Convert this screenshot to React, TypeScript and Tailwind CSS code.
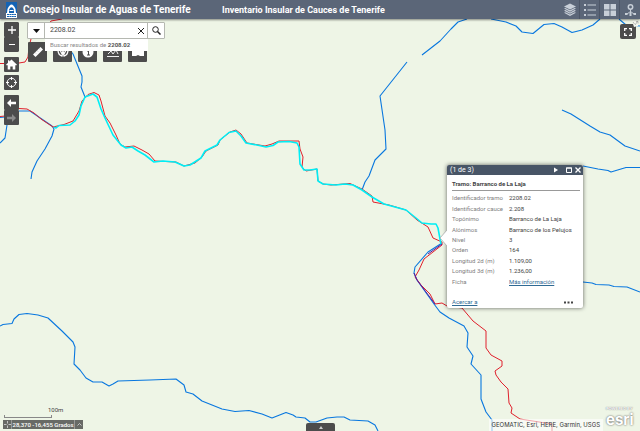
import React from "react";

const rivers = [
  "M0 326 L3 324.5 L12 323.5 L14 319 L19 314.500 L27 313.500 L38 315 L48 318 L62 331 L73 342 L75 347 L74 364 L80 370 L86 378 L93 382 L102 382 L109 386 L113 384 L118 381 L150 380 L176 379 L184 385 L186 392 L193 394 L202 401 L212 405 L222 409 L235 411.500 L249 410.500 L262 414 L272 418 L286 412.500 L293 415 L296 417 L305 418 L310 422 L316 422 L327 418 L337 417 L344 417 L350 420 L368 421 L375 425 L378 431",
  "M407 62 L380 96 L385 130 L386 149 L375 160 L369 176 L365 182 L362 190",
  "M422 55 L440 41 L451 29 L458 22 L467 19",
  "M491 19 L506 22 L516 26 L522 32 L533 33.500 L544 24.500 L554 23.500 L562 27 L572 32.500 L582 30 L593 25 L600 19",
  "M619 19 L626 25 L640 26",
  "M562 110 L571 114 L590 126 L600 132 L610 135 L625 146 L640 151",
  "M583 166 L598 169 L608 170.500 L611 172 L626 167.500 L640 167.500",
  "M583 282 L592 283 L596 284.500 L609 285 L614 286.500 L627 287 L640 292",
  "M66 45 L73 54 L82 76 L82 82 L81 87 L85 97",
  "M0 143 L5 138 L7 125",
  "M0 117.500 L5 117",
  "M19 111 L30 111 L52 126 L54 129 L52 136 L45 149 L37 161 L32 172 L31 179",
  "M442 243 L428 252 L415 267 L414 273 L417 280 L434 304 L440 312 L449 318 L464 326 L468 333 L467 347 L473 356 L471 364 L481 375 L481 399 L486 412 L492 420 L492 431",
];

const paths = [
  "M49 24 L51 21 L62 19",
  "M0 63.500 L5 63.500 M19 63 L25 62 L28 57 L29 47 L31 39",
  "M0 116.500 L5 116 M19 108.500 L27 109 L34 113 L41 119 L53 127 L64 124.500 L73 121 L79 111 L82 101 L88 94.500 L94 92.500 L99 95 L101 101 L105 116 L110 123 L116 135 L120 144 L125 147 L134 146 L142 150 L149 154 L155 161 L176 162 L184 166 L195 163 L202 157 L206 151 L218 145 L220 140 L230 132 L236 130 L241 134 L247 143 L265 146 L272 144 L279 141 L299 141 L300 149 L303 157 L302 167 L306 171 L317 169 L318 181 L323 184 L331 185 L350 183.500 L362 189 L372 196 L373 202 L389 205 L406 210 L417 220 L428 227 L433 238 L442 242 L442 245 L433 252 L424 259 L419 270 L415 277 L421 285 L430 294 L435 304 L442 303 L447 306 L462 308 L473 321 L486 331 L486 348 L491 355 L502 361 L502 366 L495 371 L496 375 L501 382 L508 389 L509 403 L512 408 L511 413 L520 419 L552 424 L552 431",
];

const selected =
  "M54 127 L56 128 L59 125.500 L70 125 L75 121 L79 115 L81 106 L85 97 L93 94 L97 97 L101 109 L105 118 L113 135 L121 145 L126 148 L132 147 L138 151 L145 155 L154 162 L163 161 L175 162 L184 166 L190 165 L201 158 L205 151 L217 145 L220 140 L229 132.500 L236 131 L241 136 L246 143 L257 145 L266 147 L273 145.500 L278 142 L289 141.500 L297 143 L299 147 L300 164 L304 170 L310 170 L317 169 L318 181 L323 184 L336 185 L345 184 L353 185 L362 190 L372 197 L384 204 L406 210 L416 218 L422 223 L431 224 L436 224 L438 228 L440 239 L441 244";

const details: [string, string][] = [
  ["Identificador tramo", "2208.02"],
  ["Identificador cauce", "2.208"],
  ["Topónimo", "Barranco de La Laja"],
  ["Alónimos", "Barranco de los Pelujos"],
  ["Nivel", "3"],
  ["Orden", "164"],
  ["Longitud 2d (m)", "1.109,00"],
  ["Longitud 3d (m)", "1.236,00"],
];

const darkButton = "flex items-center justify-center rounded-[1px] bg-[#4c4c4c] text-white";

function MapCanvas() {
  return (
    <svg
      className="absolute inset-0 h-full w-full"
      viewBox="0 19 640 412"
      preserveAspectRatio="xMidYMid slice"
      fill="none"
      strokeLinejoin="round"
      aria-hidden="true"
    >
      {rivers.map((d) => (
        <path key={d} d={d} stroke="#0877df" strokeWidth="1.1" />
      ))}
      {paths.map((d) => (
        <path key={d} d={d} stroke="#e0202c" strokeWidth="1" />
      ))}
      <path d="M435 304 L417 280 L414 273 M442 244 L428 254" stroke="#5b1a9c" strokeWidth="1" />
      <path d={selected} stroke="#00eef5" strokeWidth="1.6" />
    </svg>
  );
}

function Header() {
  return (
    <header className="relative z-10 flex h-[19px] items-center bg-[#5b6678] text-white shadow-[0_1px_2px_rgba(0,0,0,0.45)]">
      <svg className="ml-[6px] h-4 w-[11px]" viewBox="0 0 11 16" aria-hidden="true">
        <rect width="11" height="16" fill="#fff" />
        <rect width="11" height="11" fill="#1463b4" />
        <path d="M1 11 L1.500 7 Q5.500 -2 9.500 7 L10 11 Z" fill="#fff" />
        <path d="M3 11 V7.500 Q5.500 3 8 7.500 V11 Z" fill="#1463b4" />
        <path d="M3.500 8.500 H7.500" stroke="#fff" strokeWidth="1" />
        <path d="M1 12.500 H10 M1 14.500 H10" stroke="#1463b4" strokeWidth="1.200" strokeDasharray="2 .4" />
      </svg>
      <h1 className="ml-[6px] w-[199px] text-[10px] font-bold leading-[18px] whitespace-nowrap">
        Consejo Insular de Aguas de Tenerife
      </h1>
      <h2 className="text-[9px] font-bold leading-[18px] whitespace-nowrap">
        Inventario Insular de Cauces de Tenerife
      </h2>
      <nav className="ml-auto flex h-full divide-x divide-[#4c5667] text-[#c8cfd8]" aria-label="Herramientas">
        <button className="flex w-5 items-center justify-center" aria-label="Capas">
          <svg width="12" height="13" viewBox="0 0 12 13" fill="currentColor">
            <path d="M6 .5 L12 3.500 L6 6.500 L0 3.500 Z" />
            <path d="M0 5.500 L1.500 4.900 L6 7.200 L10.500 4.900 L12 5.500 L6 8.700 Z M0 7.700 L1.500 7 L6 9.400 L10.500 7 L12 7.700 L6 10.800 Z M0 9.800 L1.500 9.200 L6 11.500 L10.500 9.200 L12 9.800 L6 13 Z" />
          </svg>
        </button>
        <button className="flex w-5 items-center justify-center" aria-label="Leyenda">
          <svg width="12" height="12" viewBox="0 0 12 12" fill="currentColor">
            <path d="M0 0h2v2H0z M0 5h2v2H0z M0 10h2v2H0z M3.500 .5H12v1H3.500z M3.500 5.500H12v1H3.500z M3.500 10.500H12v1H3.500z" />
          </svg>
        </button>
        <button className="flex w-5 items-center justify-center" aria-label="Galería de mapas base">
          <svg width="12" height="12" viewBox="0 0 12 12" fill="currentColor">
            <path d="M0 0h5.500v5.500H0z M6.500 0H12v5.500H6.500z M0 6.500h5.500V12H0z M6.500 6.500H12V12H6.500z" />
          </svg>
        </button>
        <button className="flex w-5 items-center justify-center" aria-label="Street View">
          <svg width="11" height="12" viewBox="0 0 11 12" fill="none" stroke="currentColor">
            <circle cx="5.500" cy="3" r="2.200" strokeWidth="1.500" />
            <path d="M5.500 5 V9 M5.500 7.500 L2 10 M5.500 7.500 L9 10" />
            <path d="M0 9h2.500v2H0z M8.500 9H11v2H8.500z M4.500 9h2v3h-2z" fill="currentColor" stroke="none" />
          </svg>
        </button>
      </nav>
    </header>
  );
}

function NavigationControls() {
  return (
    <div className="flex w-[15px] flex-col">
      <div className="flex flex-col overflow-hidden rounded-[1px]">
        <button className={`${darkButton} h-[15px]`} aria-label="Acercar">
          <svg width="8" height="8" viewBox="0 0 8 8" stroke="currentColor" strokeWidth="1.300"><path d="M0 4h8M4 0v8" /></svg>
        </button>
        <button className={`${darkButton} h-[15px]`} aria-label="Alejar">
          <svg width="8" height="8" viewBox="0 0 8 8" stroke="currentColor" strokeWidth="1.200"><path d="M1 3.500h6" /></svg>
        </button>
      </div>
      <button className={`${darkButton} mt-[5px] h-[15px]`} aria-label="Extensión predeterminada">
        <svg width="11" height="11" viewBox="0 0 11 11" fill="currentColor">
          <path d="M5.500 .5 L11 5.700 L10 6.500 L9.300 6 V10.500 H6.700 V7.500 H4.300 V10.500 H1.700 V6 L1 6.500 L0 5.700 L2 3.800 V1.300 H3.300 V2.600 Z" />
        </svg>
      </button>
      <button className={`${darkButton} mt-[3px] h-[15px]`} aria-label="Mi ubicación">
        <svg width="11" height="11" viewBox="0 0 11 11" fill="none" stroke="currentColor">
          <circle cx="5.500" cy="5.500" r="4.300" />
          <path d="M5.500 0v3M5.500 8V11M0 5.500h3M8 5.500H11" />
        </svg>
      </button>
      <div className="mt-[5px] flex flex-col">
        <button className={`${darkButton} h-[15px]`} aria-label="Extensión anterior">
          <svg width="9" height="8" viewBox="0 0 9 8" fill="currentColor"><path d="M0 4 L4 0 V2.700 H9 V5.300 H4 V8 Z" /></svg>
        </button>
        <button className={`${darkButton} h-[15px]`} aria-label="Extensión siguiente" disabled>
          <svg width="9" height="8" viewBox="0 0 9 8" fill="#8b8b8b"><path d="M9 4 L5 0 V2.700 H0 V5.300 H5 V8 Z" /></svg>
        </button>
      </div>
    </div>
  );
}

function SearchBox() {
  return (
    <div className="relative w-[138px]">
      <form className="flex h-[17px] rounded-[1px] border border-[#b5b8b1] bg-white" onSubmit={(e) => e.preventDefault()}>
        <button type="button" className="flex w-[17px] items-center justify-center border-r border-[#b5b8b1]" aria-label="Buscar en">
          <svg width="7" height="4" viewBox="0 0 7 4"><path d="M0 0h7L3.500 4z" fill="#111" /></svg>
        </button>
        <input
          className="w-0 flex-1 px-[5px] text-[7px] leading-[15px] text-[#444] outline-none"
          defaultValue="2208.02"
          spellCheck={false}
          aria-label="Buscar"
        />
        <button type="button" className="flex w-[13px] items-center justify-center" aria-label="Borrar búsqueda">
          <svg width="6" height="6" viewBox="0 0 6 6" stroke="#222" strokeWidth="1"><path d="M0 0l6 6M6 0L0 6" /></svg>
        </button>
        <button className="flex w-[17px] items-center justify-center border-l border-[#b5b8b1]" aria-label="Buscar">
          <svg width="9" height="9" viewBox="0 0 9 9" fill="none" stroke="#222">
            <circle cx="3.500" cy="3.500" r="2.800" />
            <path d="M5.500 5.500 L8.500 8.500" strokeWidth="1.500" />
          </svg>
        </button>
      </form>
      <button className="absolute top-[17px] left-[18px] z-10 h-[12px] w-[103px] bg-white pl-[5px] text-left text-[6px] leading-[12px] whitespace-nowrap text-[#888]">
        Buscar resultados de <span className="font-bold text-[#555]">2208.02</span>
      </button>
      <div className="mt-[3px] ml-px flex gap-[6px]">
        <button className={`${darkButton} h-5 w-[19px]`} aria-label="Medición">
          <svg width="12" height="12" viewBox="0 0 12 12">
            <path d="M1 8.500 L8.500 1 L11 3.500 L3.500 11 Z" fill="#fff" />
            <path d="M3 6.500l1 1M5 4.500l1 1M7 2.500l1 1" stroke="#888" strokeWidth=".6" />
          </svg>
        </button>
        <button className={`${darkButton} h-5 w-[19px]`} aria-label="Dibujar">
          <svg width="12" height="12" viewBox="0 0 12 12" fill="none" stroke="#fff">
            <path d="M1 4 Q1 9 5 10 L6 5 L7 10 Q11 9 11 4 M3 4 L5 8 M9 4 L7 8" strokeWidth="1.300" />
          </svg>
        </button>
        <button className={`${darkButton} h-5 w-[19px]`} aria-label="Información">
          <svg width="12" height="12" viewBox="0 0 12 12"><circle cx="6" cy="6" r="5.500" fill="#fff" /><path d="M5 5h1.500v4M5 9h3M6 2.500v1" stroke="#4c4c4c" fill="none" /></svg>
        </button>
        <button className={`${darkButton} h-5 w-[19px]`} aria-label="Perfil de elevación">
          <svg width="12" height="12" viewBox="0 0 12 12" fill="none" stroke="#fff"><path d="M0 10.500h12M1 8l3-3 2 3 3-4 2 4M1 5V1h10v4" strokeWidth=".9" /></svg>
        </button>
        <button className={`${darkButton} h-5 w-[19px]`} aria-label="Imprimir">
          <svg width="12" height="12" viewBox="0 0 12 12" fill="#fff"><path d="M0 1l6 2 6-2v9l-4 0-2-1-2 1-4 0z" /></svg>
        </button>
      </div>
    </div>
  );
}

function Popup() {
  return (
    <section
      className="absolute top-[146px] left-[447px] w-[136px] rounded-[2px] bg-white text-[6px] text-[#444] shadow-[0_0_4px_rgba(0,0,0,0.6)]"
      aria-label="Tramo"
    >
      <svg className="absolute top-[65px] -left-[7px] h-[16px] w-[7px]" viewBox="0 0 7 16" aria-hidden="true">
        <path d="M7 0 L0 8 L7 16 Z" fill="#fff" />
        <path d="M7 0 L0 8 L7 16" fill="none" stroke="#aaa" strokeWidth=".8" />
      </svg>
      <div className="flex h-[10px] items-center rounded-t-[2px] bg-[#485566] pr-[2px] pl-[3px] text-[7px] leading-[10px] text-white">
        <span className="mr-auto">(1 de 3)</span>
        <button className="mr-[8px]" aria-label="Entidad siguiente">
          <svg width="4" height="6" viewBox="0 0 4 6"><path d="M0 0.500l4 2.500-4 2.500z" fill="#fff" /></svg>
        </button>
        <button className="mr-[3px]" aria-label="Maximizar">
          <svg width="6" height="6" viewBox="0 0 6 6" fill="none" stroke="#fff"><path d="M.5 1h5v4.500h-5z M0 1h6" /></svg>
        </button>
        <button aria-label="Cerrar">
          <svg width="6" height="6" viewBox="0 0 6 6" stroke="#fff" strokeWidth="1.300"><path d="M.5 .5l5 5M5.500 .5l-5 5" /></svg>
        </button>
      </div>
      <div className="pt-[4px] pr-[3px] pl-[5px]">
        <h3 className="border-b border-[#999] pb-px leading-[10px] font-bold whitespace-nowrap text-[#444]">
          Tramo: Barranco de La Laja
        </h3>
        <table className="mt-[2px] h-[94px] w-full border-collapse leading-[10px] whitespace-nowrap">
          <tbody>
            {details.map(([name, value]) => (
              <tr key={name}>
                <th className="w-[57px] p-0 text-left font-normal text-[#808080]" scope="row">{name}</th>
                <td className="p-0">{value}</td>
              </tr>
            ))}
            <tr>
              <th className="p-0 text-left font-normal text-[#808080]" scope="row">Ficha</th>
              <td className="p-0"><a href="#ficha" className="text-[#2f6a94] underline">Más información</a></td>
            </tr>
          </tbody>
        </table>
      </div>
      <div className="mt-[9px] flex h-[12px] items-center justify-between pr-[10px] pl-[5px]">
        <a href="#acercar" className="leading-[12px] text-[#2f6a94] underline">Acercar a</a>
        <button aria-label="Más opciones">
          <svg width="9" height="3" viewBox="0 0 9 3" fill="#444"><path d="M0 .5h2v2H0zM3.500 .5h2v2h-2zM7 .5h2v2H7z" /></svg>
        </button>
      </div>
    </section>
  );
}

function MapFooter() {
  return (
    <footer className="absolute inset-x-0 bottom-0 flex items-end justify-between">
      <div className="mb-[2px] ml-[3px] flex flex-col">
        <div className="flex h-[12px] items-start">
          <span className="mt-[9px] ml-px h-[3px] w-[48px] border-x border-b border-[#888]" />
          <span className="ml-[-4px] text-[6px] leading-[8px] text-[#444]">100m</span>
        </div>
        <div className="mt-[2px] flex h-[9px] items-center bg-[#686a66] text-[6px] font-medium leading-[9px] text-white">
          <button className="flex h-full w-[9px] items-center justify-center border-r border-[#999]" aria-label="Obtener coordenadas">
            <svg width="7" height="7" viewBox="0 0 7 7" stroke="#ddd" strokeWidth=".8"><path d="M3.500 0v2.500M3.500 4.500V7M0 3.500h2.500M4.500 3.500H7" /></svg>
          </button>
          <output className="flex w-[62px] justify-center whitespace-nowrap">28,370 -16,455 Grados</output>
          <button className="flex h-full w-[9px] items-center justify-center border-l border-[#999]" aria-label="Formato de coordenadas">
            <svg width="5" height="3" viewBox="0 0 5 3" fill="none" stroke="#ddd" strokeWidth=".8"><path d="M.5 2.500l2-2 2 2" /></svg>
          </button>
        </div>
      </div>
      <div className="flex items-end font-[Inter,'Liberation_Sans',sans-serif]">
        <p className="bg-white/60 px-[3px] text-[6px] leading-[12px] whitespace-nowrap text-[#333]">
          GEOMATIC, Esri, HERE, Garmin, USGS
        </p>
        <a href="#esri" className="mr-[3px] mb-[2px] ml-[3px] flex w-[31px] flex-col text-white" aria-label="Powered by Esri">
          <span className="text-[4px] leading-[5px] font-bold whitespace-nowrap text-shadow-[0_0_1px_#555]">POWERED BY</span>
          <span className="text-[15px] leading-[18px] font-bold text-shadow-[0_0_2px_#444]">esri</span>
        </a>
      </div>
    </footer>
  );
}

export default function App() {
  return (
    <div className="flex min-h-screen flex-col overflow-hidden bg-[#eef5e6] font-[Roboto,'Liberation_Sans',sans-serif]">
      <Header />
      <main className="relative flex-1">
        <MapCanvas />
        <div className="relative flex items-start pt-[3px] pr-[4px] pl-[4px]">
          <NavigationControls />
          <div className="ml-[8px]"><SearchBox /></div>
          <button className={`${darkButton} relative mt-[2px] ml-auto h-[15px] w-[16px] rounded-[2px]`} aria-label="Pantalla completa">
            <svg width="8" height="8" viewBox="0 0 8 8" fill="none" stroke="#fff" strokeWidth="1.300"><path d="M.7 3V.7H3M5 .7h2.300V3M7.300 5v2.300H5M3 7.300H.7V5" /></svg>
            <svg className="absolute -top-[4px] -right-[3px]" width="7" height="7" viewBox="0 0 7 7">
              <path d="M0 1l2-1 5 1-1 5-4 1z" fill="#f4f7ef" />
              <path d="M1 2l1.500 2M5.500 1.500L3 5M4 1.500h2v2" stroke="#999" strokeWidth=".7" fill="none" />
            </svg>
          </button>
        </div>
        <Popup />
        <MapFooter />
        <button className="absolute bottom-0 left-1/2 -ml-[14px] flex h-[8px] w-[29px] items-center justify-center rounded-t-[2px] bg-[#4c4c4c]" aria-label="Abrir tabla de atributos">
          <svg width="4" height="3" viewBox="0 0 4 3"><path d="M2 0l2 3H0z" fill="#ccc" /></svg>
        </button>
      </main>
    </div>
  );
}
